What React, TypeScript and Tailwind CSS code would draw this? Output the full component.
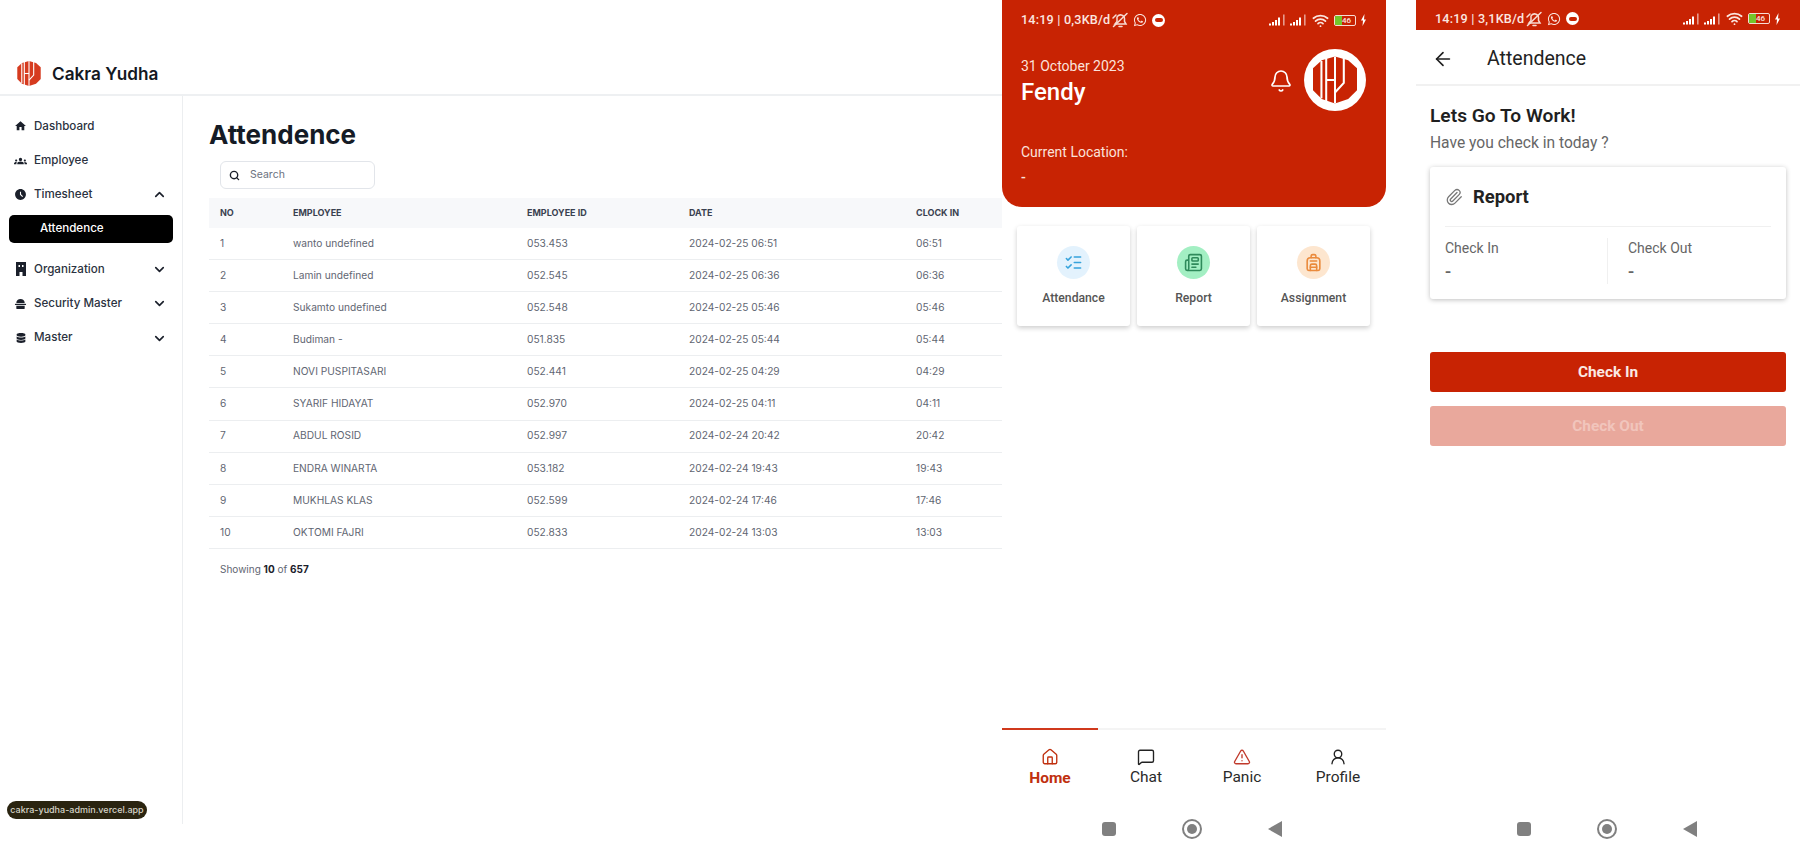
import React from "react";
import { Bell, ArrowLeft, ChevronDown, ChevronUp, Search, ListChecks, Newspaper, Backpack, House, MessageSquare, TriangleAlert, UserRound, Paperclip, Wifi } from "lucide-react";
import { MdHome, MdGroups, MdAccessTimeFilled } from "react-icons/md";
import { FaDatabase, FaWhatsapp } from "react-icons/fa";

const rows = [
  ["1", "wanto undefined", "053.453", "2024-02-25 06:51", "06:51"],
  ["2", "Lamin undefined", "052.545", "2024-02-25 06:36", "06:36"],
  ["3", "Sukamto undefined", "052.548", "2024-02-25 05:46", "05:46"],
  ["4", "Budiman -", "051.835", "2024-02-25 05:44", "05:44"],
  ["5", "NOVI PUSPITASARI", "052.441", "2024-02-25 04:29", "04:29"],
  ["6", "SYARIF HIDAYAT", "052.970", "2024-02-25 04:11", "04:11"],
  ["7", "ABDUL ROSID", "052.997", "2024-02-24 20:42", "20:42"],
  ["8", "ENDRA WINARTA", "053.182", "2024-02-24 19:43", "19:43"],
  ["9", "MUKHLAS KLAS", "052.599", "2024-02-24 17:46", "17:46"],
  ["10", "OKTOMI FAJRI", "052.833", "2024-02-24 13:03", "13:03"],
];

function Logo({ className, fill }: { className: string; fill: string }) {
  return (
    <svg viewBox="0 0 60 64" className={className}>
      <path d="M0 16 L12 5 L30 0 L48 5 L60 16 V46 L48 58 L30 64 L12 58 L0 46 Z" fill={fill} />
      <g stroke="#fff" strokeWidth="2.8" fill="none">
        <path d="M11.5 6 V57" />
        <path d="M18 2 V62" />
        <path d="M18 32 H30" />
        <path d="M30 0 V64" />
        <path d="M42 0 V36 L30 49" />
      </g>
    </svg>
  );
}

function OrgIcon() {
  return (
    <svg width="12" height="14" viewBox="0 0 12 14" fill="currentColor">
      <path d="M1 0 H11 V14 H7.5 V10 H4.5 V14 H1 Z M3.5 3 V5 H5 V3 Z M7 3 V5 H8.5 V3 Z" fillRule="evenodd" />
    </svg>
  );
}

function GuardIcon() {
  return (
    <svg width="14" height="14" viewBox="0 0 14 14" fill="currentColor">
      <path d="M2.5 6 A4.5 4.5 0 0 1 11.5 6 Z" />
      <rect x="1" y="6.6" width="12" height="1.6" rx="0.6" />
      <path d="M2.5 9 H11.5 V11.5 A1 1 0 0 1 10.5 12.5 H3.5 A1 1 0 0 1 2.5 11.5 Z" />
    </svg>
  );
}

function SideItem({ icon, label, chevron }: { icon: React.ReactNode; label: string; chevron?: "up" | "down" }) {
  return (
    <div className="flex h-[34.4px] items-center pl-[14px] pr-[15px] text-[11.6px] font-medium text-[#2b3240]">
      <span className="flex w-[13px] justify-center text-[#1b202b]">{icon}</span>
      <span className="ml-[7px] flex-1">{label}</span>
      {chevron === "up" && <ChevronUp size={15} strokeWidth={2.6} className="text-[#1b202b]" />}
      {chevron === "down" && <ChevronDown size={15} strokeWidth={2.6} className="text-[#1b202b]" />}
    </div>
  );
}

function Signal() {
  return (
    <svg width="18" height="12" viewBox="0 0 18 12" fill="#fff">
      <rect x="0" y="9.5" width="2" height="2" />
      <rect x="3" y="8" width="2" height="3.5" />
      <rect x="6" y="6" width="2" height="5.5" />
      <rect x="9" y="3.5" width="2" height="8" />
      <rect x="14" y="0.5" width="1.6" height="11" opacity="0.55" />
    </svg>
  );
}

function MutedBell() {
  return (
    <svg width="17" height="16" viewBox="0 0 17 16" fill="none" stroke="#f7dcd4" strokeWidth="1.5" strokeLinecap="round">
      <path d="M3 12 H14 L12.5 9.5 V6.5 A4 4 0 0 0 5 5 V9.5 Z" />
      <path d="M7 14.5 H10" />
      <path d="M1.5 14.5 L15 1.5" />
      <path d="M1 6 L4 3" />
    </svg>
  );
}

function StatusBar({ speed }: { speed: string }) {
  return (
    <div className="flex items-center px-[19px] text-[12.6px] font-medium text-[#fbe6e0]">
      <span className="tracking-[0.2px]">14:19 | {speed}</span>
      <span className="ml-[2px]">
        <MutedBell />
      </span>
      <FaWhatsapp size={14} className="ml-[4px]" />
      <span className="ml-[5px] flex h-[13px] w-[13px] items-center justify-center rounded-full bg-white">
        <span className="h-[4px] w-[8px] rounded-sm bg-[#c82303]" />
      </span>
      <span className="flex-1" />
      <Signal />
      <span className="w-[3px]" />
      <Signal />
      <Wifi size={17} strokeWidth={2.5} className="ml-[4px]" />
      <span className="ml-[5px] flex h-[11px] w-[22px] overflow-hidden rounded-[2px] border border-[#f7dcd4] text-[8px] leading-[9px]">
        <span className="w-[7px] bg-[#74c62b]" />
        <span>46</span>
      </span>
      <svg width="7" height="12" viewBox="0 0 7 12" fill="#fff" className="ml-[4px]">
        <path d="M4.5 0 L1 6.5 H3 L2.5 12 L6 5.5 H4 Z" />
      </svg>
    </div>
  );
}

function AndroidNav() {
  return (
    <div className="flex h-[40px] items-center justify-center gap-[66px]">
      <span className="h-[14px] w-[14px] rounded-[3px] bg-[#808080]" />
      <span className="flex h-[20px] w-[20px] items-center justify-center rounded-full border-2 border-[#808080]">
        <span className="h-[10px] w-[10px] rounded-full bg-[#808080]" />
      </span>
      <svg width="14" height="16" viewBox="0 0 14 16" fill="#808080">
        <path d="M14 0 V16 L0 8 Z" />
      </svg>
    </div>
  );
}

function Tile({ icon, bg, label }: { icon: React.ReactNode; bg: string; label: string }) {
  return (
    <div className="flex h-[100px] w-[113px] flex-col items-center rounded-[3px] bg-white pt-[20px] shadow-[0_2px_5px_rgba(0,0,0,0.2)]">
      <span className={`flex h-[33px] w-[33px] items-center justify-center rounded-full ${bg}`}>{icon}</span>
      <span className="mt-[10px] text-[12.2px] font-medium leading-[18px] text-[#555]">{label}</span>
    </div>
  );
}

function NavItem({ icon, label, active }: { icon: React.ReactNode; label: string; active?: boolean }) {
  return (
    <div className="flex w-[96px] flex-col items-center">
      {icon}
      <span className={active ? "mt-[2px] text-[15.5px] font-bold leading-[20px] text-[#c0300f]" : "mt-[1px] text-[15.5px] leading-[20px] text-[#2a2a2a]"}>{label}</span>
    </div>
  );
}

export default function App() {
  return (
    <div className="flex h-[853px] w-[1800px] overflow-hidden bg-white">
      {/* Web admin */}
      <div className="w-[1002px] shrink-0 font-['Inter',sans-serif]">
        <header className="flex h-[96px] items-end border-b-2 border-[#eef0f2] pb-[8px] pl-[17px]">
          <Logo className="h-[25px] w-[24px]" fill="#d63b1f" />
          <span className="ml-[11px] text-[17.2px] font-semibold leading-[24px] text-[#14181f]">Cakra Yudha</span>
        </header>
        <div className="flex">
          <aside className="relative h-[728px] w-[183px] shrink-0 border-r border-[#eceef0] pt-[13px]">
            <SideItem icon={<MdHome size={14} />} label="Dashboard" />
            <SideItem icon={<MdGroups size={14} />} label="Employee" />
            <SideItem icon={<MdAccessTimeFilled size={13} />} label="Timesheet" chevron="up" />
            <div className="mx-[9px] mt-[3px] flex h-[28px] items-center rounded-[5px] bg-black pl-[31px] text-[11.6px] font-medium text-white">Attendence</div>
            <div className="h-[9px]" />
            <SideItem icon={<OrgIcon />} label="Organization" chevron="down" />
            <SideItem icon={<GuardIcon />} label="Security Master" chevron="down" />
            <SideItem icon={<FaDatabase size={10} />} label="Master" chevron="down" />
            <div className="absolute left-[7px] top-[705px] flex h-[18px] w-[140px] items-center justify-center whitespace-nowrap rounded-full bg-[#2a2410] text-[9px] font-medium text-[#d6d4c8]">cakra-yudha-admin.vercel.app</div>
          </aside>
          <main className="min-w-0 flex-1 overflow-hidden pl-[26px]">
            <h1 className="mt-[21px] text-[26px] font-bold leading-[36px] text-[#151b26]">Attendence</h1>
            <div className="ml-[11px] mt-[8px] flex h-[28px] w-[155px] items-center rounded-[6px] border border-[#e2e5ea] pl-[8px] text-[10.5px] text-[#6b7280]">
              <Search size={11} strokeWidth={3} className="text-[#1b202b]" />
              <span className="ml-[10px]">Search</span>
            </div>
            <div className="mt-[9px] w-[793px]">
              <div className="grid h-[30px] grid-cols-[73px_234px_162px_227px_86px] items-center bg-[#f7f8fa] pl-[11px] text-[9px] font-bold text-[#3a4150]">
                <span>NO</span>
                <span>EMPLOYEE</span>
                <span>EMPLOYEE ID</span>
                <span>DATE</span>
                <span>CLOCK IN</span>
              </div>
              {rows.map((r) => (
                <div key={r[0]} className="grid h-[32.1px] grid-cols-[73px_234px_162px_227px_86px] items-center border-b border-[#eceef0] pl-[11px] text-[10.2px] text-[#5f6672]">
                  {r.map((c, i) => (
                    <span key={i}>{c}</span>
                  ))}
                </div>
              ))}
            </div>
            <div className="ml-[11px] mt-[13px] text-[10px] text-[#5f6672]">
              Showing <b className="text-[#1b202b]">10</b> of <b className="text-[#1b202b]">657</b>
            </div>
          </main>
        </div>
      </div>

      {/* Phone home */}
      <div className="flex h-[853px] w-[384px] shrink-0 flex-col font-['Roboto',sans-serif]">
        <div className="h-[207px] rounded-b-[20px] bg-[#c82303] pt-[11px] text-white">
          <StatusBar speed="0,3KB/d" />
          <div className="mt-[16px] flex items-start px-[19px]">
            <div className="flex-1">
              <div className="mt-[10px] text-[14px] leading-[20px] text-[#fbe2db]">31 October 2023</div>
              <div className="text-[24px] font-medium leading-[32px]">Fendy</div>
            </div>
            <Bell size={24} strokeWidth={1.7} className="mr-[11px] mt-[23px]" />
            <span className="mr-[1px] mt-[3px] flex h-[62px] w-[62px] items-center justify-center rounded-full bg-white">
              <Logo className="h-[50px] w-[44px]" fill="#c82303" />
            </span>
          </div>
          <div className="mt-[31px] px-[19px] text-[14px] leading-[20px] text-[#fbe2db]">Current Location:</div>
          <div className="mt-[5px] px-[19px] text-[14px] font-medium leading-[20px] text-[#fbe2db]">-</div>
        </div>
        <div className="mt-[19px] flex gap-[7px] px-[15px]">
          <Tile bg="bg-[#e3f2fd]" label="Attendance" icon={<ListChecks size={19} className="text-[#36a3dc]" />} />
          <Tile bg="bg-[#a3efc3]" label="Report" icon={<Newspaper size={19} className="text-[#2f8a5b]" />} />
          <Tile bg="bg-[#fde6cf]" label="Assignment" icon={<Backpack size={19} className="text-[#ea8a3c]" />} />
        </div>
        <div className="flex-1" />
        <div className="h-[2px] bg-[#f4f4f4]">
          <div className="h-[2px] w-[96px] bg-[#d0391c]" />
        </div>
        <div className="flex h-[79px] pt-[18px]">
          <NavItem active label="Home" icon={<House size={18} strokeWidth={1.8} className="text-[#c0300f]" />} />
          <NavItem label="Chat" icon={<MessageSquare size={18} strokeWidth={1.8} className="text-[#222]" />} />
          <NavItem label="Panic" icon={<TriangleAlert size={18} strokeWidth={1.8} className="text-[#c0392b]" />} />
          <NavItem label="Profile" icon={<UserRound size={18} strokeWidth={1.8} className="text-[#222]" />} />
        </div>
        <div className="pb-[4px] pr-[5px]">
          <AndroidNav />
        </div>
      </div>

      {/* Phone attendance */}
      <div className="ml-[30px] flex h-[853px] w-[384px] shrink-0 flex-col font-['Roboto',sans-serif]">
        <div className="flex h-[30px] items-center bg-[#c82303] pt-[8px]">
          <div className="w-full">
            <StatusBar speed="3,1KB/d" />
          </div>
        </div>
        <div className="flex h-[56px] items-center border-b-2 border-[#f1f1f1] pl-[16px] pt-[3px]">
          <ArrowLeft size={22} strokeWidth={1.8} className="text-[#1f1f1f]" />
          <span className="ml-[33px] text-[19.5px] leading-[24px] text-[#222]">Attendence</span>
        </div>
        <div className="px-[14px]">
          <div className="mt-[18px] text-[19.2px] font-semibold leading-[24px] text-[#1f1f1f]">Lets Go To Work!</div>
          <div className="mt-[4px] text-[15.6px] leading-[22px] text-[#666]">Have you check in today ?</div>
          <div className="mt-[13px] h-[132px] rounded-[3px] bg-white px-[15px] shadow-[0_1px_5px_rgba(0,0,0,0.25)]">
            <div className="flex h-[60px] items-center border-b border-[#f0f0f0] pt-[1px]">
              <Paperclip size={18} strokeWidth={1.7} className="text-[#777]" />
              <span className="ml-[10px] text-[18.4px] font-bold text-[#222]">Report</span>
            </div>
            <div className="mt-[11px] flex">
              <div className="h-[46px] w-[163px] border-r border-[#f0f0f0]">
                <div className="text-[14px] leading-[20px] text-[#666]">Check In</div>
                <div className="mt-[4px] text-[18px] font-medium leading-[20px] text-[#666]">-</div>
              </div>
              <div className="pl-[20px]">
                <div className="text-[14px] leading-[20px] text-[#666]">Check Out</div>
                <div className="mt-[4px] text-[18px] font-medium leading-[20px] text-[#666]">-</div>
              </div>
            </div>
          </div>
          <div className="mt-[53px] flex h-[40px] items-center justify-center rounded-[3px] bg-[#c82303] pt-[2px] text-[15.4px] font-bold text-[#fbe9e4]">Check In</div>
          <div className="mt-[14px] flex h-[40px] items-center justify-center rounded-[3px] bg-[#e9a89c] pt-[2px] text-[15.4px] font-bold text-[#f1c5bc]">Check Out</div>
        </div>
        <div className="flex-1" />
        <div className="pb-[4px] pr-[2px]">
          <AndroidNav />
        </div>
      </div>
    </div>
  );
}
